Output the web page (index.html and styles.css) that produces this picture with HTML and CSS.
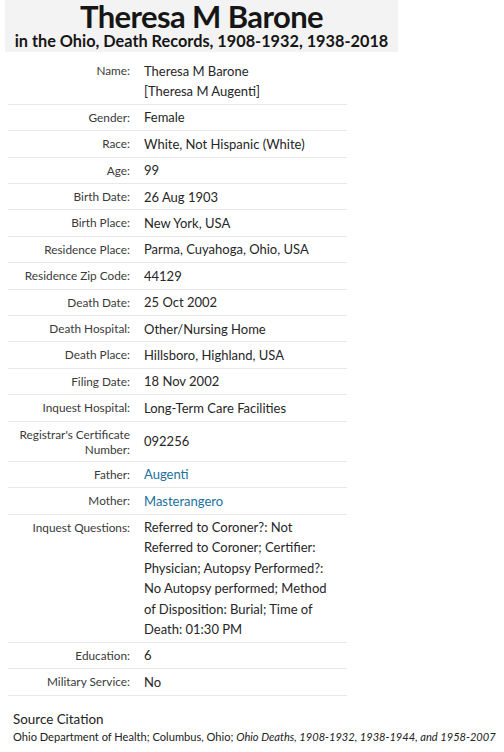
FILE: index.html
```html
<!DOCTYPE html>
<html>
<head>
<meta charset="utf-8">
<link rel="stylesheet" href="styles.css">
</head>
<body>
<div class="header">
  <div class="title">Theresa M Barone</div>
  <div class="subtitle">in the Ohio, Death Records, 1908-1932, 1938-2018</div>
</div>
<table class="record">
  <tr><th>Name:</th><td>Theresa M Barone<br>[Theresa M Augenti]</td></tr>
  <tr><th>Gender:</th><td>Female</td></tr>
  <tr><th>Race:</th><td>White, Not Hispanic (White)</td></tr>
  <tr><th>Age:</th><td>99</td></tr>
  <tr><th>Birth Date:</th><td>26 Aug 1903</td></tr>
  <tr><th>Birth Place:</th><td>New York, USA</td></tr>
  <tr><th>Residence Place:</th><td>Parma, Cuyahoga, Ohio, USA</td></tr>
  <tr><th>Residence Zip Code:</th><td>44129</td></tr>
  <tr><th>Death Date:</th><td>25 Oct 2002</td></tr>
  <tr><th>Death Hospital:</th><td>Other/Nursing Home</td></tr>
  <tr><th>Death Place:</th><td>Hillsboro, Highland, USA</td></tr>
  <tr><th>Filing Date:</th><td>18 Nov 2002</td></tr>
  <tr><th>Inquest Hospital:</th><td>Long-Term Care Facilities</td></tr>
  <tr><th>Registrar's Certificate Number:</th><td>092256</td></tr>
  <tr><th>Father:</th><td><a class="link" href="#">Augenti</a></td></tr>
  <tr><th>Mother:</th><td><a class="link" href="#">Masterangero</a></td></tr>
  <tr><th>Inquest Questions:</th><td>Referred to Coroner?: Not Referred to Coroner; Certifier: Physician; Autopsy Performed?: No Autopsy performed; Method of Disposition: Burial; Time of Death: 01:30 PM</td></tr>
  <tr><th>Education:</th><td>6</td></tr>
  <tr><th>Military Service:</th><td>No</td></tr>
</table>
<div class="source">
  <div class="source-title">Source Citation</div>
  <div class="source-text">Ohio Department of Health; Columbus, Ohio; <i>Ohio Deaths, 1908-1932, 1938-1944, and 1958-2007</i></div>
</div>
</body>
</html>
```
FILE: styles.css
```css
html, body {
  margin: 0;
  padding: 0;
  background: #ffffff;
}
body {
  font-family: Lato, "Liberation Sans", sans-serif;
  color: #2b2b2b;
  width: 504px;
  height: 752px;
  overflow: hidden;
}
.header {
  margin-left: 5px;
  width: 393px;
  height: 52px;
  padding-top: 1px;
  box-sizing: border-box;
  background: #f3f3f3;
  text-align: center;
  color: #161616;
  font-weight: 700;
}
.title {
  font-size: 31px;
  line-height: 30px;
  letter-spacing: -0.6px;
}
.subtitle {
  font-size: 16.3px;
  line-height: 20px;
}
.record {
  margin: 6px 0 0 8px;
  width: 339px;
  border-collapse: collapse;
}
.record tr {
  border-bottom: 1px solid #e8e8e8;
}
.record th {
  width: 122px;
  padding: 5px 7px 4px 0;
  text-align: right;
  vertical-align: top;
  font-weight: 400;
  font-size: 11.8px;
  line-height: 15px;
  color: #3a3a3a;
}
.record td {
  padding: 2.5px 10px 2.5px 7px;
  vertical-align: middle;
  font-size: 13px;
  line-height: 20.4px;
  color: #262626;
}
.link {
  color: #21709d;
  text-decoration: none;
}
.source {
  padding: 14px 0 0 13px;
}
.source-title {
  font-size: 13.4px;
  line-height: 19px;
  color: #222;
}
.source-text {
  font-size: 11.1px;
  line-height: 16px;
  color: #222;
  white-space: nowrap;
}
```
